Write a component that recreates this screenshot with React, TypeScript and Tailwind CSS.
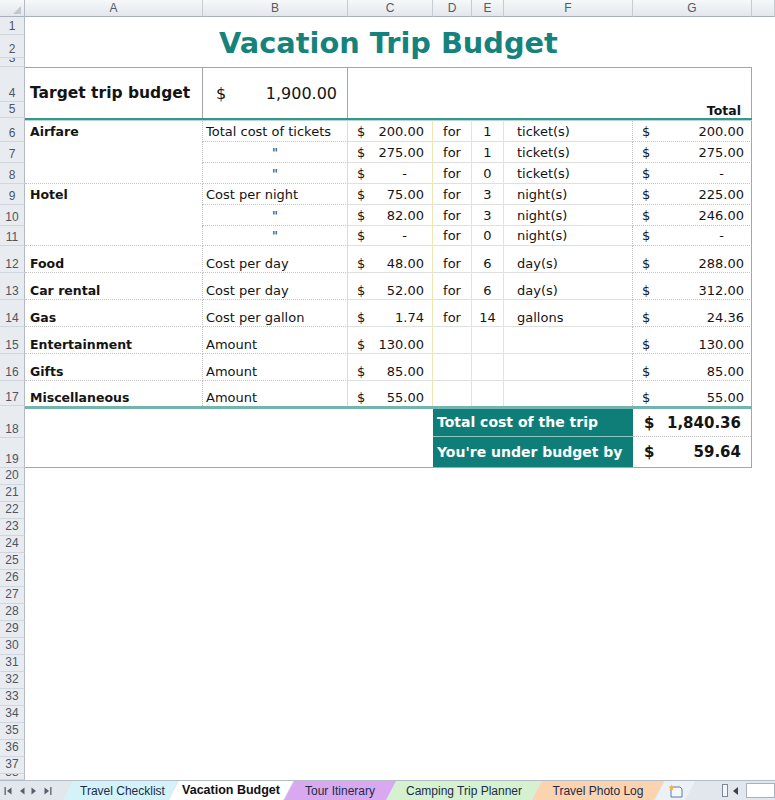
import React from 'react';

const RHC =
  "shrink-0 w-[25px] bg-[#e8ecf1] border-r border-r-[#b3bac3] border-b border-b-[#d0d6dd] flex items-end justify-center overflow-hidden font-['Liberation_Sans',Arial,sans-serif] text-[12px] leading-[14px] text-[#4d5560]";

function RH({ n, h, pb = 'pb-[1px]' }: { n: number; h: string; pb?: string }) {
  return (
    <div className={`${RHC} ${h} ${pb}`}>
      <span>{n}</span>
    </div>
  );
}

function RHFill({ h }: { h: string }) {
  return <div className={`shrink-0 w-[25px] bg-[#e8ecf1] border-r border-r-[#b3bac3] ${h}`} />;
}

const HDR =
  "h-full shrink-0 flex items-center justify-center border-r border-r-[#c6ccd3] border-b border-b-[#a8b0ba] bg-linear-to-b from-[#f6f8fa] to-[#e3e7ec] text-[12px] text-[#555b63]";

type Row = {
  n: number;
  h: string;
  tall?: boolean;
  last?: boolean;
  a?: string;
  aLine?: boolean;
  b?: string;
  ditto?: boolean;
  c: string;
  e?: string;
  f?: string;
  g: string;
};

const rows: Row[] = [
  { n: 6, h: 'h-[21px]', a: 'Airfare', b: 'Total cost of tickets', c: '200.00', e: '1', f: 'ticket(s)', g: '200.00' },
  { n: 7, h: 'h-[21px]', ditto: true, c: '275.00', e: '1', f: 'ticket(s)', g: '275.00' },
  { n: 8, h: 'h-[21px]', ditto: true, aLine: true, c: '-', e: '0', f: 'ticket(s)', g: '-' },
  { n: 9, h: 'h-[21px]', a: 'Hotel', b: 'Cost per night', c: '75.00', e: '3', f: 'night(s)', g: '225.00' },
  { n: 10, h: 'h-[21px]', ditto: true, c: '82.00', e: '3', f: 'night(s)', g: '246.00' },
  { n: 11, h: 'h-[20px]', ditto: true, aLine: true, c: '-', e: '0', f: 'night(s)', g: '-' },
  { n: 12, h: 'h-[27px]', tall: true, aLine: true, a: 'Food', b: 'Cost per day', c: '48.00', e: '6', f: 'day(s)', g: '288.00' },
  { n: 13, h: 'h-[27px]', tall: true, aLine: true, a: 'Car rental', b: 'Cost per day', c: '52.00', e: '6', f: 'day(s)', g: '312.00' },
  { n: 14, h: 'h-[27px]', tall: true, aLine: true, a: 'Gas', b: 'Cost per gallon', c: '1.74', e: '14', f: 'gallons', g: '24.36' },
  { n: 15, h: 'h-[27px]', tall: true, aLine: true, a: 'Entertainment', b: 'Amount', c: '130.00', g: '130.00' },
  { n: 16, h: 'h-[27px]', tall: true, aLine: true, a: 'Gifts', b: 'Amount', c: '85.00', g: '85.00' },
  { n: 17, h: 'h-[25px]', tall: true, last: true, a: 'Miscellaneous', b: 'Amount', c: '55.00', g: '55.00' },
];

function DataRow({ r }: { r: Row }) {
  const v = r.tall ? 'items-end pb-[1px]' : 'items-center';
  const dot = r.last ? '' : 'border-b border-b-[#c4c4c4] [border-bottom-style:dotted]';
  const sol = r.last ? '' : 'border-b border-b-[#e0e0e0]';
  const aB = r.aLine && !r.last ? 'border-b border-b-[#c4c4c4] [border-bottom-style:dotted]' : '';
  return (
    <div className={`flex ${r.h}`}>
      <RH n={r.n} h="h-full" />
      <div
        className={`w-[178px] shrink-0 h-full flex ${v} pl-[5px] font-bold text-[12.5px] leading-[15px] border-r border-r-[#bdbdbd] [border-right-style:dotted] ${aB}`}
      >
        {r.a}
      </div>
      <div
        className={`w-[145px] shrink-0 h-full flex ${v} ${r.ditto ? 'justify-center text-[#333]' : 'pl-[3px]'} text-[13px] leading-[15px] border-r border-r-[#f2d9ae] ${dot}`}
      >
        {r.ditto ? '"' : r.b}
      </div>
      <div
        className={`w-[85px] shrink-0 h-full flex ${v} justify-between pl-[9px] pr-[8px] text-[13px] leading-[15px] border-r border-r-[#f0e6b2] ${sol}`}
      >
        <span>$</span>
        {r.c === '-' ? <span className="pr-[17px]">-</span> : <span>{r.c}</span>}
      </div>
      <div
        className={`w-[39px] shrink-0 h-full flex ${v} justify-center text-[13px] leading-[15px] border-r border-r-[#f0e6b2] ${sol}`}
      >
        {r.e !== undefined ? 'for' : ''}
      </div>
      <div
        className={`w-[32px] shrink-0 h-full flex ${v} justify-center text-[13px] leading-[15px] border-r border-r-[#f0e6b2] ${sol}`}
      >
        {r.e}
      </div>
      <div
        className={`w-[129px] shrink-0 h-full flex ${v} pl-[13px] text-[13px] leading-[15px] border-r border-r-[#bdbdbd] [border-right-style:dotted] ${sol}`}
      >
        {r.f}
      </div>
      <div
        className={`w-[119px] shrink-0 h-full flex ${v} justify-between pl-[9px] pr-[7px] text-[13px] leading-[15px] border-r border-r-[#a6a6a6] ${dot}`}
      >
        <span>$</span>
        {r.g === '-' ? <span className="pr-[20px]">-</span> : <span>{r.g}</span>}
      </div>
    </div>
  );
}

function NavArrow({ dir, bar }: { dir: 'l' | 'r'; bar?: boolean }) {
  return (
    <svg width="9" height="8" viewBox="0 0 9 8">
      {dir === 'l' ? (
        <>
          {bar && <rect x="0.5" y="0" width="1.3" height="8" fill="#56606d" />}
          <path d="M7.5 0.5 L3 4 L7.5 7.5 Z" fill="#56606d" />
        </>
      ) : (
        <>
          <path d="M1.5 0.5 L6 4 L1.5 7.5 Z" fill="#56606d" />
          {bar && <rect x="7.2" y="0" width="1.3" height="8" fill="#56606d" />}
        </>
      )}
    </svg>
  );
}

const TAB =
  'h-full shrink-0 flex items-center justify-center [clip-path:polygon(10px_0,100%_0,calc(100%-10px)_100%,0_100%)]';

export default function App() {
  const blanks: number[] = [];
  for (let i = 20; i <= 37; i++) blanks.push(i);
  return (
    <div className="w-[775px] h-[800px] overflow-hidden bg-white font-['DejaVu_Sans',Verdana,sans-serif] text-[#141414]">
      {/* column header */}
      <div className="flex h-[17px] font-['Liberation_Sans',Arial,sans-serif]">
        <div className="w-[25px] h-full shrink-0 relative border-r border-r-[#b3bac3] border-b border-b-[#a8b0ba] bg-linear-to-b from-[#f6f8fa] to-[#e3e7ec]">
          <svg className="absolute right-[3px] bottom-[2px]" width="8" height="8" viewBox="0 0 8 8">
            <path d="M8 0 L8 8 L0 8 Z" fill="#c2c8cf" />
          </svg>
        </div>
        <div className={`${HDR} w-[178px]`}>A</div>
        <div className={`${HDR} w-[145px]`}>B</div>
        <div className={`${HDR} w-[85px]`}>C</div>
        <div className={`${HDR} w-[39px]`}>D</div>
        <div className={`${HDR} w-[32px]`}>E</div>
        <div className={`${HDR} w-[129px]`}>F</div>
        <div className={`${HDR} w-[119px]`}>G</div>
        <div className={`${HDR} flex-1`}></div>
      </div>

      {/* title rows 1-3 */}
      <div className="flex h-[50px]">
        <div className="w-[25px] shrink-0 flex flex-col">
          <RH n={1} h="h-[18px]" />
          <RH n={2} h="h-[23px]" />
          <RH n={3} h="h-[9px]" />
        </div>
        <div className="w-[727px] shrink-0 flex justify-center pt-[9px]">
          <span className="text-[28.8px] font-bold leading-[34px] text-[#16827c]">Vacation Trip Budget</span>
        </div>
      </div>

      {/* rows 4-5 */}
      <div className="flex h-[51px]">
        <div className="w-[25px] shrink-0 flex flex-col">
          <RH n={4} h="h-[35px]" />
          <RH n={5} h="h-[16px]" />
        </div>
        <div className="w-[178px] shrink-0 border-t border-t-[#a6a6a6] border-r border-r-[#a6a6a6] flex items-center pl-[5px] pt-[1px] text-[15.5px] font-bold">
          Target trip budget
        </div>
        <div className="w-[145px] shrink-0 border-t border-t-[#a6a6a6] border-r border-r-[#a6a6a6] flex items-center justify-between pl-[13px] pr-[10px] pt-[1px] text-[16px]">
          <span>$</span>
          <span>1,900.00</span>
        </div>
        <div className="w-[404px] shrink-0 border-t border-t-[#a6a6a6] border-r border-r-[#a6a6a6] flex items-end justify-end pr-[10px] text-[12.5px] leading-[15px] font-bold">
          Total
        </div>
      </div>
      <div className="flex h-[3px]">
        <RHFill h="h-full" />
        <div className="w-[727px] shrink-0 bg-[#3a958e] border-b border-b-[#b5dad6]" />
      </div>

      {rows.map((r) => (
        <DataRow key={r.n} r={r} />
      ))}

      <div className="flex h-[3px]">
        <RHFill h="h-full" />
        <div className="w-[727px] shrink-0 bg-[#72b5ae]" />
      </div>

      {/* rows 18-19 */}
      <div className="flex h-[59px]">
        <div className="w-[25px] shrink-0 flex flex-col">
          <RH n={18} h="h-[29px]" />
          <RH n={19} h="h-[30px]" />
        </div>
        <div className="w-[727px] shrink-0 flex border-b border-b-[#a6a6a6] border-r border-r-[#a6a6a6]">
          <div className="w-[408px] shrink-0" />
          <div className="w-[200px] shrink-0 flex flex-col bg-[#0f7d78] text-white font-bold text-[14px] leading-[17px]">
            <div className="h-[28px] flex items-center pl-[4px] border-b border-b-[#8fc7c2]">Total cost of the trip</div>
            <div className="flex-1 flex items-center pl-[4px]">You're under budget by</div>
          </div>
          <div className="flex-1 flex flex-col font-bold text-[15px] leading-[18px]">
            <div className="h-[28px] flex items-center justify-between pl-[11px] pr-[10px] border-b border-b-[#bdbdbd] [border-bottom-style:dotted]">
              <span>$</span>
              <span>1,840.36</span>
            </div>
            <div className="flex-1 flex items-center justify-between pl-[11px] pr-[10px]">
              <span>$</span>
              <span>59.64</span>
            </div>
          </div>
        </div>
      </div>

      {blanks.map((n) => (
        <div key={n} className="flex h-[17px]">
          <RH n={n} h="h-full" pb="pb-[2px]" />
        </div>
      ))}
      <div className="flex h-[6px]">
        <RH n={38} h="h-full" pb="pb-0" />
      </div>

      {/* sheet tabs */}
      <div className="flex h-[20px] bg-[#e2e7ed] border-t border-t-[#b3bcc7] font-['Liberation_Sans',Arial,sans-serif] text-[12px] text-[#1d2b48]">
        <div className="w-[58px] shrink-0 flex items-center gap-[4px] pl-[4px]">
          <NavArrow dir="l" bar />
          <NavArrow dir="l" />
          <NavArrow dir="r" />
          <NavArrow dir="r" bar />
        </div>
        <div className="w-[5px] shrink-0" />
        <div className={`${TAB} w-[115px] bg-[#d3f3f9] pl-[4px]`}>Travel Checklist</div>
        <div className={`${TAB} w-[124px] -ml-[9px] bg-white font-bold text-[12.5px] text-[#111]`}>Vacation Budget</div>
        <div className={`${TAB} w-[112px] -ml-[9px] bg-[#d9a9ef]`}>Tour Itinerary</div>
        <div className={`${TAB} w-[154px] -ml-[9px] bg-[#d6f1cf]`}>Camping Trip Planner</div>
        <div className={`${TAB} w-[132px] -ml-[9px] bg-[#fbd3ae]`}>Travel Photo Log</div>
        <div className={`${TAB} w-[40px] -ml-[9px] bg-[#edf0f4]`}>
          <svg width="16" height="14" viewBox="0 0 16 14">
            <path d="M4 3 H13 L15 5 V13 H4 Z" fill="#f4f7fb" stroke="#5d7ca8" strokeWidth="1" />
            <path d="M4.5 0.5 L5.4 2.6 L7.6 2.8 L5.9 4.2 L6.4 6.4 L4.5 5.2 L2.6 6.4 L3.1 4.2 L1.4 2.8 L3.6 2.6 Z" fill="#f2b43a" />
          </svg>
        </div>
        <div className="flex-1" />
        <div className="w-[6px] h-[13px] self-center shrink-0 border border-[#7d8896] bg-[#f4f6f8] mr-[5px]" />
        <div className="shrink-0 flex items-center mr-[8px]">
          <svg width="5" height="8" viewBox="0 0 5 8">
            <path d="M5 0 L0 4 L5 8 Z" fill="#3b424b" />
          </svg>
        </div>
        <div className="w-[29px] shrink-0 my-[2px] bg-white border border-[#a8b2be]" />
      </div>
    </div>
  );
}
